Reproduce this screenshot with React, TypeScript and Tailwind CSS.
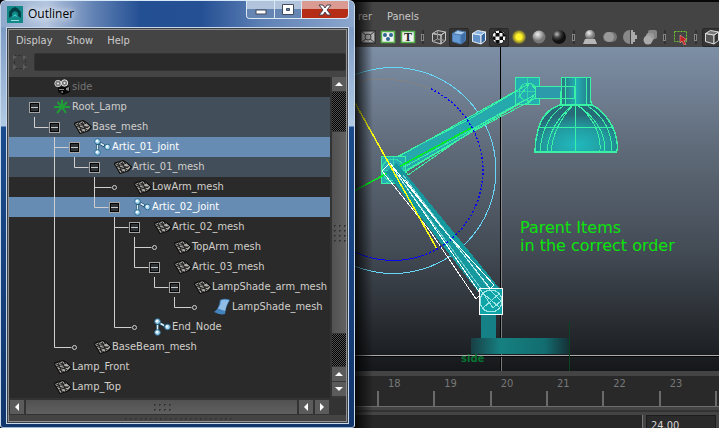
import type { ReactNode } from "react";

type IconKind = "camera" | "locator" | "mesh" | "joint" | "surface";
type Row = {
  name: string;
  level: number;
  icon: IconKind;
  node: "open" | "leaf" | "none";
  tone?: "parent" | "selected" | "dim";
  through?: number[];
  last?: boolean;
};

const rows: Row[] = [
  { name: "side", level: 0, icon: "camera", node: "none", tone: "dim" },
  { name: "Root_Lamp", level: 0, icon: "locator", node: "open", tone: "parent" },
  { name: "Base_mesh", level: 1, icon: "mesh", node: "open", tone: "parent", last: true },
  { name: "Artic_01_joint", level: 2, icon: "joint", node: "open", tone: "selected" },
  { name: "Artic_01_mesh", level: 3, icon: "mesh", node: "open", tone: "parent", through: [1], last: true },
  { name: "LowArm_mesh", level: 4, icon: "mesh", node: "leaf", through: [1] },
  { name: "Artic_02_joint", level: 4, icon: "joint", node: "open", tone: "selected", through: [1], last: true },
  { name: "Artic_02_mesh", level: 5, icon: "mesh", node: "open", through: [1] },
  { name: "TopArm_mesh", level: 6, icon: "mesh", node: "leaf", through: [1, 4] },
  { name: "Artic_03_mesh", level: 6, icon: "mesh", node: "open", through: [1, 4], last: true },
  { name: "LampShade_arm_mesh", level: 7, icon: "mesh", node: "open", through: [1, 4], last: true },
  { name: "LampShade_mesh", level: 8, icon: "surface", node: "leaf", through: [1, 4], last: true },
  { name: "End_Node", level: 5, icon: "joint", node: "leaf", through: [1], last: true },
  { name: "BaseBeam_mesh", level: 2, icon: "mesh", node: "leaf", last: true },
  { name: "Lamp_Front", level: 0, icon: "mesh", node: "none" },
  { name: "Lamp_Top", level: 0, icon: "mesh", node: "none" },
];

function NodeIcon({ kind }: { kind: IconKind }) {
  if (kind === "mesh")
    return (
      <svg width="18" height="20" viewBox="0 0 18 20" aria-hidden="true">
        <path d="M0 6.500L9 3.500L13 6L17.500 10L14 14L6 16.500L3.500 12Z" fill="#aeaba6" stroke="#0c0c0c" strokeWidth="1.200" strokeLinejoin="round" />
        <path d="M4 5.500L8 15.500M8 4.500L12 14.500M2 9.500L11.500 6.500M4.500 13L15 9.500M1 6.500L6 8.500M5 5.500L10 7.500M9 4L12 7M3 9.500L10 11.500M7.500 8.500L14 10.500M6 13L10 15M10 11L14 13.500" stroke="#1b1b1b" strokeWidth=".9" fill="none" />
      </svg>
    );
  if (kind === "joint")
    return (
      <svg width="18" height="20" viewBox="0 0 18 20" aria-hidden="true">
        <path d="M3.500 5V16M4 5L13 10.500" stroke="#174864" strokeWidth="3" />
        <path d="M3.500 8V13M6.500 6.500L10 8.500" stroke="#e3f2fa" strokeWidth="1.500" />
        {[[3.5, 4.5], [3.5, 15.5], [13.5, 10]].map(([x, y]) => (
          <g key={`${x}${y}`}>
            <circle cx={x} cy={y} r="2.800" fill="#a9d5ef" stroke="#2e6d91" />
            <circle cx={x - 0.6} cy={y - 0.6} r="1.200" fill="#f4fbff" />
          </g>
        ))}
      </svg>
    );
  if (kind === "camera")
    return (
      <svg width="18" height="20" viewBox="0 0 18 20" aria-hidden="true">
        <path d="M4 10L14 9L16 11V15L9 18L4 15Z" fill="#080808" />
        <circle cx="4" cy="6.500" r="3.200" fill="#777" stroke="#c8c8c8" />
        <circle cx="10.500" cy="6" r="3.200" fill="#777" stroke="#e2e2e2" />
        <circle cx="4" cy="6.500" r="1" fill="#eee" />
        <circle cx="10.500" cy="6" r="1" fill="#eee" />
        <path d="M5 12h5v1H5zM12 11l3-1v4l-3-1zM6 15l3-1 0 2z" fill="#888" />
      </svg>
    );
  if (kind === "locator")
    return (
      <svg width="18" height="20" viewBox="0 0 18 20" aria-hidden="true">
        <path d="M8 2.500V10M8 10H16M8 10H0M8 10L3.500 5M8 10L13 5M8 10L3 16M8 10L12 16" stroke="#1f9d37" strokeWidth="2" />
      </svg>
    );
  return (
    <svg width="18" height="20" viewBox="0 0 18 20" aria-hidden="true">
      <path d="M6 3Q11 .5 16 3Q12 9 11 17Q6 18.500 0 15Q5 12 6 3Z" fill="#4282bd" />
      <path d="M7 3.500Q11 2 15 3.500Q12 8 11 14L4 11.500Q7 8 7 3.500Z" fill="#8fbde6" />
    </svg>
  );
}

const toneClass = {
  parent: "bg-[#434e5b] text-[#d0cfca]",
  selected: "bg-[#668cb3] text-white",
  dim: "text-[#757575]",
  plain: "text-[#d0cfca]",
};

function TreeRow({ row }: { row: Row }) {
  const lineX = (level: number) => 25.5 + 20 * level;
  const nodeX = lineX(row.level);
  const width = 45 + 20 * row.level;
  return (
    <li className={`flex h-5 items-center whitespace-nowrap leading-5 ${toneClass[row.tone ?? "plain"]}`}>
      <svg width={width} height="20" className="flex-none" aria-hidden="true">
        <g stroke="#cfcfcf" fill="none">
          {(row.through ?? []).map((l) => (
            <path key={l} d={`M${lineX(l)} 0V20`} />
          ))}
          {row.level > 0 && (
            <>
              <path d={`M${lineX(row.level - 1)} 0V${row.last ? 10.5 : 20}`} />
              <path d={`M${lineX(row.level - 1)} 10.5H${nodeX - (row.node === "open" ? 6 : 3)}`} />
            </>
          )}
          {row.node === "leaf" && <circle cx={nodeX} cy="10.500" r="2" />}
        </g>
        {row.node === "open" && (
          <g>
            <rect x={nodeX - 5} y="5.500" width="10" height="10" fill="none" stroke="#a3a3a3" />
            <rect x={nodeX - 4} y="6.500" width="8" height="8" fill="#2e3338" stroke="#050505" />
            <path d={`M${nodeX - 3.5} 10.5h7`} stroke="#c8c8c8" />
          </g>
        )}
      </svg>
      <NodeIcon kind={row.icon} />
      <span>{row.name}</span>
    </li>
  );
}

function Arrow({ dir, label }: { dir: "up" | "down" | "left" | "right"; label: string }) {
  const d = { up: "M3 9h8L7 5z", down: "M3 5h8L7 9z", left: "M9 3v8L5 7z", right: "M5 3v8l4-4z" }[dir];
  return (
    <button aria-label={label} className="size-[14px] flex-none bg-[#5b5b5b]">
      <svg width="14" height="14" aria-hidden="true">
        <path d={d} fill="#fff" />
      </svg>
    </button>
  );
}

const dither =
  "bg-[#484848] bg-[repeating-conic-gradient(#000_0_25%,#505050_0_50%)] bg-[length:2px_2px]";
const grip = "bg-[radial-gradient(circle,#353535_1px,transparent_1px)] bg-[length:5px_5px]";

function Outliner() {
  return (
    <section className="flex w-[355px] flex-none flex-col rounded-t-[6px] rounded-b-[3px] border border-t-[#d7e8f8] border-x-[#c5d8ec] border-b-[#9fb9d8] bg-[linear-gradient(180deg,#a9bfdb_0,#7f9cc5_28px,#b1cae4_125px,#1b4b8d_126px,#12356c_100%)] px-[5px]">
      <header className="-mx-[5px] flex h-[26px] flex-none items-start rounded-t-[5px] bg-[linear-gradient(90deg,#8ea8cb_0,#b5c6df_45px,#5e7fb2_95px,#234f93_140px,#255094_200px,#5d80b5_260px,#8da7cd_100%)] pl-[6px]">
        <svg width="17" height="18" viewBox="0 0 17 18" className="mt-1" aria-hidden="true">
          <rect width="16" height="17" y="1" fill="#19a09c" />
          <path d="M0 1h16v17H0z" fill="#0d6f74" opacity=".5" />
          <path d="M2 13V7L5 3.500 8 2l3 1.500L14 7v6l-3-2V8L8 6 5 8v3z" fill="#053f46" />
          <path d="M5 12l3-3 3 3-3-1z" fill="#38cfc1" />
          <path d="M4 15.500h8" stroke="#98dddb" />
        </svg>
        <h1 className="ml-1 mt-1 flex-1 font-['Open_Sans',sans-serif] text-[12px] leading-[18px] text-black [text-shadow:0_0_6px_#fff,0_0_9px_#fff]">
          Outliner
        </h1>
        <div className="mr-[5px] flex h-[18px] rounded-b-[4px] border border-t-0 border-[#dce7f6] [&>button]:flex [&>button]:items-center [&>button]:justify-center">
          <button aria-label="Minimize" className="w-[28px] rounded-bl-[4px] border-r border-[#dce7f6] bg-linear-to-b from-[#b2c4dc] from-45% to-[#6585b2] to-50%">
            <svg width="12" height="12" aria-hidden="true"><rect x="1" y="6" width="10" height="4" fill="#fff" stroke="#424b5c" /></svg>
          </button>
          <button aria-label="Maximize" className="w-[27px] border-r border-[#dce7f6] bg-linear-to-b from-[#b2c4dc] from-45% to-[#6585b2] to-50%">
            <svg width="12" height="12" aria-hidden="true"><path d="M.5.500h11v10H.5zM4.500 4.500h3v2h-3z" fill="#fff" fillRule="evenodd" stroke="#424b5c" /></svg>
          </button>
          <button aria-label="Close" className="w-[46px] rounded-br-[4px] bg-linear-to-b from-[#d99b92] from-45% to-[#b52c17] to-50%">
            <svg width="14" height="12" aria-hidden="true"><path d="M1 1h4l2 3 2-3h4l-4 5 4 5H9L7 8l-2 3H1l4-5z" fill="#fff" stroke="#4c4050" /></svg>
          </button>
        </div>
      </header>
      <div className="mb-[3px] flex min-h-0 flex-1 flex-col border border-[#c9d9eb] bg-[#3b4046] p-px">
        <div className="flex min-h-0 flex-1 flex-col border border-[#909090] bg-[#444] text-[11px]">
          <nav className="flex h-[22px] flex-none items-center gap-[14px] pl-[7px] text-[#cbcbcb]">
            <button>Display</button>
            <button>Show</button>
            <button>Help</button>
          </nav>
          <div className="flex h-[20px] flex-none items-center gap-[6px] pl-[3px]">
            <button aria-label="Filter options" className="h-4 w-4">
              <svg width="16" height="16" aria-hidden="true">
                <rect x="2.500" y="1.500" width="11" height="13" fill="none" stroke="#2b2b2b" strokeDasharray="2 2" />
                <path d="M1 1l4 2-4 3zM11 1l4 2-4 3zM1 10l4 3-4 3zM11 10l4 3-4 3z" fill="#5b5b5b" />
              </svg>
            </button>
            <input aria-label="Search" className="h-[18px] min-w-0 flex-1 rounded-[2px] border border-[#333] bg-[#2a2a2a] px-1 text-[#ccc] outline-none" />
          </div>
          <div className="flex min-h-0 flex-1 pt-[5px]">
            <ul className="min-w-0 flex-1 overflow-hidden bg-[#2a2a2a]">
              {rows.map((r) => (
                <TreeRow key={r.name} row={r} />
              ))}
            </ul>
            <div className="flex w-4 flex-none flex-col items-center gap-px border-l-2 border-[#333] bg-[#383838]">
              <Arrow dir="up" label="Scroll up" />
              <div className={`h-[39px] w-full flex-none ${dither}`} />
              <div className="flex w-full flex-1 items-center justify-center bg-linear-to-r from-[#515151] to-[#626262]">
                <div className={`h-5 w-[15px] ${grip}`} />
              </div>
              <div className={`h-[32px] w-full flex-none ${dither}`} />
              <Arrow dir="up" label="Step up" />
              <Arrow dir="down" label="Scroll down" />
              <div className="h-px" />
            </div>
          </div>
          <div className="flex h-[17px] flex-none items-center gap-[2px] bg-[#333] pl-px pr-[17px]">
            <Arrow dir="left" label="Scroll left" />
            <div className="flex h-[14px] flex-1 items-center justify-center bg-linear-to-b from-[#515151] to-[#606060]">
              <div className={`h-[10px] w-5 ${grip}`} />
            </div>
            <Arrow dir="left" label="Step left" />
            <Arrow dir="right" label="Scroll right" />
          </div>
          <div className="flex h-[6px] flex-none items-center justify-center">
            <div className={`h-[5px] w-[110px] ${grip}`} />
          </div>
        </div>
      </div>
    </section>
  );
}

function Tool({ label, pressed, children }: { label: string; pressed?: boolean; children: ReactNode }) {
  return (
    <button
      aria-label={label}
      className={`flex h-[19px] w-5 flex-none items-center justify-center rounded-[2px] ${pressed ? "border border-[#292929] bg-[#353535]" : ""}`}
    >
      <svg width="16" height="16" viewBox="0 0 16 16" className="flex-none" aria-hidden="true">
        {children}
      </svg>
    </button>
  );
}

function Separator() {
  return (
    <svg width="11" height="16" className="flex-none" aria-hidden="true">
      <path d="M5 1v14" stroke="#222" />
      <rect x="3.500" y="5.500" width="2" height="6" fill="#333" stroke="#858585" />
    </svg>
  );
}

function Cube({ front, side, top, line }: { front: string; side: string; top: string; line: string }) {
  return (
    <g stroke={line} strokeLinejoin="round">
      <path d="M1.500 4.500L10 6V15L1.500 12.500Z" fill={front} />
      <path d="M10 6L14.500 3V11.500L10 15Z" fill={side} />
      <path d="M1.500 4.500L6.500 1.500L14.500 3L10 6Z" fill={top} />
    </g>
  );
}

function Toolbar() {
  return (
    <div className="flex h-5 flex-none items-center overflow-hidden bg-[#444] pl-[3px]" role="toolbar">
      <svg width="0" height="0" aria-hidden="true">
        <defs>
          <radialGradient id="sun"><stop offset=".35" stopColor="#fff42a" /><stop offset=".7" stopColor="#cabb20" stopOpacity=".7" /><stop offset="1" stopColor="#444" stopOpacity="0" /></radialGradient>
          <radialGradient id="pale" cx=".4" cy=".3"><stop stopColor="#eee" /><stop offset="1" stopColor="#777" /></radialGradient>
          <radialGradient id="dark" cx=".35" cy=".3"><stop stopColor="#bbb" /><stop offset=".5" stopColor="#444" /><stop offset="1" stopColor="#111" /></radialGradient>
          <clipPath id="ball"><circle cx="8" cy="8" r="6.500" /></clipPath>
        </defs>
      </svg>
      <Tool label="Film gate">
        <rect x="1" y="2" width="14" height="12" fill="#b5b5b5" stroke="#222" />
        <path d="M1 2l14 12M15 2L1 14" stroke="#333" />
        <circle cx="8" cy="8" r="3" fill="#aaa" stroke="#444" />
      </Tool>
      <Tool label="Particles">
        <rect x="1.500" y="2.500" width="13" height="11" fill="#f2f2f2" stroke="#55b34a" strokeWidth="1.500" />
        <circle cx="5" cy="6" r="2" fill="#2e6791" /><circle cx="11" cy="6" r="2" fill="#2e6791" /><circle cx="8" cy="10" r="2" fill="#2e6791" />
      </Tool>
      <Tool label="Text display">
        <rect x="1.500" y="2.500" width="13" height="11" fill="#f2f2f2" stroke="#55b34a" strokeWidth="1.500" />
        <text x="8" y="12" textAnchor="middle" fontFamily="Liberation Serif, serif" fontWeight="bold" fontSize="12" fill="#222">T</text>
      </Tool>
      <Separator />
      <Tool label="Wireframe">
        <Cube front="none" side="none" top="none" line="#c4c4c4" />
        <path d="M6.500 1.500V10L1.500 12.500M6.500 10L14.500 11.500" fill="none" stroke="#999" />
      </Tool>
      <Tool label="Smooth shade" pressed><Cube front="#6499d4" side="#3f6ea6" top="#a9cbee" line="#4c7db5" /></Tool>
      <Tool label="Shaded wireframe"><Cube front="#6292c7" side="#33679e" top="#86b3e1" line="#e8eef5" /></Tool>
      <Tool label="Textured" pressed>
        <circle cx="8" cy="8" r="7" fill="#f1f1f1" stroke="#0a0a0a" />
        <g clipPath="url(#ball)" fill="#080808">
          <path d="M1 1h4v3H1zM8 1h4v3H8zM4.500 4h4v3.500h-4zM11.500 4H15v3.500h-3.500zM1 7.500h3.500V11H1zM8.500 7.500h3.500V11H8.500zM4.500 11h4v4h-4zM12 11h3v4h-3z" />
        </g>
      </Tool>
      <Tool label="Lights"><circle cx="8" cy="8" r="8" fill="url(#sun)" /></Tool>
      <Tool label="Default material"><circle cx="8" cy="8" r="6.500" fill="url(#pale)" /></Tool>
      <Tool label="Shadows"><circle cx="8" cy="8" r="7" fill="url(#dark)" /></Tool>
      <Separator />
      <Tool label="Occlusion"><circle cx="8" cy="6" r="5" fill="url(#pale)" /><path d="M3 10h10l2 5H1z" fill="#b7b7b7" /></Tool>
      <Tool label="Motion blur"><rect x="1" y="3" width="14" height="10" rx="5" fill="#777" /><circle cx="7" cy="8" r="5" fill="#999" /></Tool>
      <Tool label="Anti-aliasing"><path d="M8 1v14A7 7 0 018 1z" fill="#888" /><path d="M9 1h2v2h2v3h2v4h-2v3h-2v2H9z" fill="#aaa" /></Tool>
      <Tool label="Depth of field"><rect x="6" y="1" width="9" height="9" rx="2" fill="#858585" /><rect x="4" y="4" width="8" height="8" rx="3" fill="#999" /><circle cx="6" cy="11" r="4.500" fill="#aaa" /></Tool>
      <Separator />
      <Tool label="Isolate select">
        <rect x="1.500" y="2.500" width="12" height="10" fill="none" stroke="#6cc62e" strokeDasharray="2 1" />
        <path d="M7 6l7 5-3 .5 2 4-2 .5-2-4-2 2z" fill="#c22020" stroke="#f0b0b0" strokeWidth=".5" />
      </Tool>
      <Separator />
      <Tool label="X-ray" pressed><Cube front="#555" side="#333" top="#777" line="#ddd" /></Tool>
    </div>
  );
}

function Scene() {
  return (
    <svg width="364" height="324" viewBox="355 47 364 324" className="block overflow-visible" aria-label="Lamp model, side view" shapeRendering="crispEdges">
      <defs>
        <linearGradient id="base"><stop stopColor="#183f44" /><stop offset=".3" stopColor="#168080" /><stop offset=".75" stopColor="#126d70" /><stop offset="1" stopColor="#163137" /></linearGradient>
        <radialGradient id="shade" cx=".5" cy=".85" r=".65"><stop stopColor="#20babe" /><stop offset=".6" stopColor="#229a9f" /><stop offset="1" stopColor="#276b78" /></radialGradient>
        <linearGradient id="neck"><stop stopColor="#2b707d" /><stop offset=".5" stopColor="#22aeb5" /><stop offset="1" stopColor="#29717f" /></linearGradient>
      </defs>
      <path d="M500.500 47V371" stroke="#050505" />
      <path d="M501.500 110V371" stroke="#929292" strokeOpacity=".8" />
      <path d="M355 355.500H2000" stroke="#aaa" />
      <path d="M355 356.500H2000" stroke="#080808" />
      <path d="M569.500 322V371" stroke="#064520" />
      <rect x="481" y="300" width="15" height="39" fill="#158187" />
      <rect x="471" y="338" width="98" height="16" fill="url(#base)" />

      <path d="M355 82Q392 74 431 89" fill="none" stroke="#8b8278" strokeDasharray="2 1" />
      <circle cx="393" cy="170.500" r="103" fill="none" stroke="#67d8fa" />

      <g stroke="#39f2a5" fill="none">
        <path d="M398 157L530 83L538 93L405 171Z" fill="#25a9ad" />
        <rect x="381.500" y="156.500" width="24" height="27" fill="#27abb3" />
        <rect x="515.500" y="77.500" width="24" height="27" fill="#27abb3" />
        <path d="M398 156L468 120L530 83M404 167L538 93M402 174L472 132L538 97M408 175L405 170M408 175L483 123L523 101" />
        <path d="M402 176L386 183M393 157V183M382 170H405M527.500 78V104M516 91H539" strokeOpacity=".6" />
        <g strokeOpacity=".7">
          <circle cx="393" cy="170" r="11" /><circle cx="528" cy="92" r="9" />
        </g>
        <path d="M518 98L530 83L537 91L528 104" />
        <rect x="535.500" y="86.500" width="38" height="12" fill="#2d9aab" />
        <path d="M561.500 77.500H590.500V100L592 105H561Z" fill="url(#neck)" strokeWidth="1.500" />
        <path d="M565.500 78V105M575.500 78V105M586.500 78V105M562 86.500H574V98.500H562" />
        <path d="M560 105C548 109 541 118 538 130Q535 141 535 152H616Q619 148 617 143Q616 131 609 121Q602 110 592 105Z" fill="url(#shade)" strokeWidth="1.500" />
        <path d="M539 127.500H612M575.500 103V152" strokeWidth="1.500" />
        <path d="M563 106Q542 120 540 152M574 104Q549 124 547 152M574 104Q553 126 551 152M576 104Q602 124 600 152M576 104Q606 124 605 152M588 106Q612 122 612 152" />
      </g>
      <path d="M355 190.500L471 128" stroke="#00f01b" strokeWidth="1.500" />

      <path d="M386 172L397 163L500 289L486 302Z" fill="#16999e" />
      <g stroke="#fff" fill="none">
        <path d="M390 163L382 171L430 231L476 299L483 292M390 163L442 228L494 285L489 290" />
        <path d="M393 168L489 306M405 180L492 291" />
        <path d="M396 173L493 305M403 175L495 296" stroke="#9ee5e5" strokeOpacity=".7" />
      </g>
      <path d="M355 103L437 249" stroke="#ffff12" strokeWidth="1.500" />
      <g fill="none" stroke="#0808f0">
        <path d="M431 89A90 90 0 01424 255" strokeDasharray="2 2" strokeWidth="1.500" />
        <path d="M424 255A90 90 0 01355 252" />
      </g>
      <rect x="479.500" y="288.500" width="23" height="26" fill="#0fa4a8" stroke="#fff" strokeWidth="1.500" />
      <g fill="none" stroke="#c1f6f3" strokeOpacity=".8">
        <circle cx="491" cy="301" r="11" />
        <path d="M480 289L493 308L501 301L489 289M483 308L500 293M484 294L499 307" />
      </g>
      <text x="461" y="362" fill="#087232" fontFamily="DejaVu Sans, sans-serif" fontSize="10" fontWeight="bold">side</text>
    </svg>
  );
}

function Timeline() {
  return (
    <div className="flex-none border-t-[5px] border-[#444] bg-[#292929] text-[11px] text-[#777]">
      <div className="flex h-[31px] pl-[22px] border-b border-[#6d6d6d]">
        {["18", "19", "20", "21", "22", "23"].map((n) => (
          <div key={n} className="flex flex-1 flex-col">
            <span className="pl-[11px] leading-[15px]">{n}</span>
            <div className="h-4 border-l-2 border-[#6a6a6a]" />
          </div>
        ))}
        <div className="mt-[15px] w-[4px] flex-none border-l-2 border-[#6a6a6a]" />
      </div>
      <div className="h-[8px] border-y-[3px] border-[#444] bg-[#333]" />
      <div className="flex h-[13px] overflow-hidden bg-[#444]">
        <div className="flex-1 border-r border-[#777] bg-[#272727]" />
        <input
          aria-label="Playback end"
          defaultValue="24.00"
          className="ml-[3px] mr-[3px] h-[20px] w-[70px] flex-none border border-[#1c1c1c] bg-[#2a2a2a] pl-1 text-[11px] leading-[18px] text-[#d5d5d5] outline-none"
        />
      </div>
    </div>
  );
}

export default function App() {
  return (
    <main className="flex h-screen min-h-[428px] overflow-hidden bg-black font-['DejaVu_Sans_Condensed','DejaVu_Sans',sans-serif]">
      <Outliner />
      <section className="relative flex min-w-0 flex-1 flex-col overflow-hidden">
        <nav className="flex h-[27px] flex-none items-center gap-[15px] border-t-2 border-[#080808] bg-[#444] pt-[5px] text-[11px] text-[#c8c8c8]">
          <button className="flex w-[17px] justify-end">rer</button>
          <button>Panels</button>
        </nav>
        <Toolbar />
        <div className="relative min-h-0 flex-1 overflow-hidden bg-[linear-gradient(180deg,#7d8fa6_0%,#5e6977_33%,#444c56_62%,#292d32_85%,#15171a_100%)]">
          <Scene />
          <p className="absolute left-[165px] top-[172px] font-['DejaVu_Sans',sans-serif] text-[16px] leading-[18px] text-[#0be40b]">
            Parent Items
            <br />
            in the correct order
          </p>
        </div>
        <Timeline />
        <div className="pointer-events-none absolute inset-y-0 left-0 w-[18px] bg-linear-to-r from-black/80 to-transparent" />
      </section>
    </main>
  );
}
